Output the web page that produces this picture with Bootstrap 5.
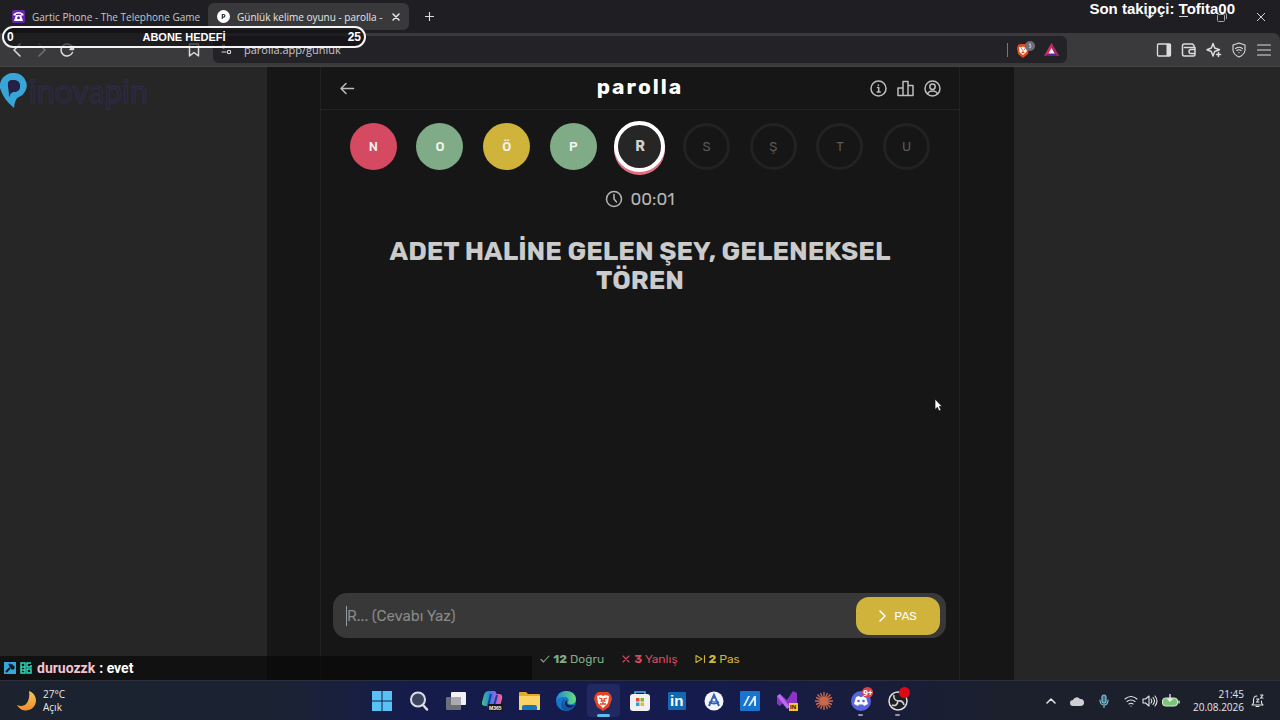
<!DOCTYPE html>
<html lang="tr" data-bs-theme="dark">
<head>
<meta charset="utf-8">
<meta name="viewport" content="width=device-width, initial-scale=1">
<title>Günlük kelime oyunu - parolla</title>
<link rel="stylesheet" href="https://cdn.jsdelivr.net/npm/bootstrap@5.3.0/dist/css/bootstrap.min.css">
<style>
:root{--rubik:Rubik,Inter,"Liberation Sans",sans-serif;--segoe:"Segoe UI","Open Sans","Noto Sans",sans-serif;--arial:Arial,"Liberation Sans",sans-serif}
body{background:#262626;font-family:var(--segoe);font-size:11px;line-height:16px;color:#dcdcdc}
button{color:inherit;background:none;border:0;padding:0;display:inline-flex;align-items:center;justify-content:center}
svg{display:block;flex:none}
.line-icon{fill:none;stroke:currentColor;stroke-width:1.5;stroke-linecap:round;stroke-linejoin:round}
.fine{stroke-width:1.1}
.dim{color:#707073}
/* browser */
.tabstrip{height:33px;background:#1f1e23}
.tab-link{height:27px;font-size:10px;color:#c6c6c8;text-decoration:none}
.tab-first{width:204px;padding:0 0 0 12px;gap:7px}
.tab-open{width:201px;padding:0 9px;gap:7px;background:#39393c;border-radius:6px;color:#e6e6e6}
.tab-title{flex:1;white-space:nowrap}
.win-buttons{gap:25px;padding-right:14px;color:#d5d5d7}
.toolbar{display:grid;grid-template-columns:213px minmax(0,1fr) 213px;height:34px;background:#3a3a3d;border-top-right-radius:7px;border-bottom:1px solid #434346}
.toolbar-wrap{background:#1f1e23}
.nav-left{padding:0 12px 0 9px;gap:9px}
.nav-right{gap:9px;padding-right:8px}
.url-box{background:#232227;border-radius:6px;margin:3px 0;padding:0 8px;gap:12px}
.url-field{background:none;border:0;outline:0;color:#c5c5c8;font-size:11px;padding:0;min-width:0;height:18px}
.url-actions{gap:8px}
.divider{width:1px;height:14px;background:#77777a}
/* game */
.stage{background:#161616;width:747px;max-width:100%}
.game{width:640px;max-width:100%;border:solid #222;border-width:0 1px;font-family:var(--rubik);color:#bdbdbd}
.game-head{display:grid;grid-template-columns:1fr auto 1fr;height:43px;border-bottom:1px solid #242424;padding:0 17px}
.brand-name{font-size:21px;line-height:24px;font-weight:700;letter-spacing:2px;color:#fff;margin:0 0 2px}
.letters{display:grid;grid-template-columns:repeat(9,1fr);width:600px;max-width:100%;margin:9px auto 0;padding:0;list-style:none}
.letters li{display:flex;align-items:center;justify-content:center;height:55px}
.ball{display:flex;align-items:center;justify-content:center;width:47px;height:47px;border-radius:50%;font-size:13px;font-weight:500;color:#f4f4f4}
.ball-wrong{background:#d54a61}.ball-right{background:#7fab87}.ball-pass{background:#cfb33b}
.ball-wait{border:3px solid #222;color:#5a5a5a;font-weight:400}
.ball-now{width:51px;height:51px;background:#262626;border:4px solid #fff;box-shadow:0 3px 0 #df7082;color:#d0d0d0;font-weight:700;font-size:14px}
.clock{font-size:17px;line-height:20px;margin-top:15px;gap:7px;color:#b5b5b5}
.question{font-size:26px;line-height:29px;font-weight:700;color:#cbcbcb;text-align:center;margin:28px auto 0;width:520px;max-width:100%}
.answer{background:#383838;border-radius:14px;height:45px;margin:0 13px 0 12px;padding:3px 6px 3px 13px}
.answer-input{background:none;border:0;border-left:1px solid #999;outline:0;color:#ddd;font-size:15px;height:20px;padding:0;min-width:0}
.answer-input::placeholder{color:#898989;opacity:1}
.pass-btn{width:84px;height:38px;border-radius:13px;background:#cfb33b;color:#fff;font-size:12px;font-weight:400;gap:7px}
.stats{font-size:12px;line-height:16px;gap:17px;margin:13px 0;color:#7fab87}
.stats span{display:flex;align-items:center;gap:3px}
.stats b{font-weight:700}
.st-wrong{color:#d54a61}.st-pass{color:#cfb33b}
/* stream overlays */
.goal{position:absolute;left:2px;top:26px;width:364px;height:22px;padding:0 3px;border:2px solid #f4f4f4;border-radius:11px;background:rgba(15,15,18,.65);font:700 12px/18px var(--arial);color:#fff}
.goal-end{flex:1}
.goal-title{font-size:11px}
.follower{position:absolute;right:45px;top:0;font:700 15px/18px var(--arial);color:#fff}
.sponsor{position:absolute;left:0;top:72px}
.sponsor-name{font:400 32px/38px Lato,sans-serif;-webkit-text-stroke:1px #302c48;color:#262530}
.chat{position:absolute;left:0;bottom:40px;width:532px;height:24px;background:rgba(8,8,8,.7);padding-left:4px;font:700 14px/24px Roboto,sans-serif;color:#fff}
.chat-name{color:#f3c3d2;margin:0 4px 0 5px}
.pointer{position:absolute;left:934px;top:398px}
/* taskbar */
.taskbar{height:40px;background:linear-gradient(90deg,#1c222e 0,#1b2233 22%,#151c4b 32%,#151b4d 55%,#191d38 70%,#1b202d 78%,#1b202b);border-top:1px solid #292f3b;display:grid;grid-template-columns:1fr 552px 1fr}
.weather{font-size:10px;line-height:13px;padding-left:16px;gap:7px;color:#e8e8ea}
.apps{display:grid;grid-template-columns:repeat(15,1fr)}
.apps button{position:relative}
.apps .running::after{content:"";position:absolute;bottom:4px;width:5px;height:2px;border-radius:1px;background:#9295a5}
.apps .focused{background:#212960;border-radius:4px;margin:3px 2px}
.apps .focused::after{content:"";position:absolute;bottom:0;width:13px;height:3px;border-radius:2px;background:#5fbbea}
.note{position:absolute;top:6px;left:20px;min-width:11px;height:11px;border-radius:6px;background:#d84552;color:#fff;font:700 8px/11px var(--segoe)}
.note-live{background:#e00913}
.tray{padding-right:16px;gap:14px;color:#e6e6ea}
.status-group{gap:4px}
.mic{color:#8fc7dd}
.date{font-size:10px;line-height:13px;text-align:right;margin:0 -7px 0 -1px}
</style>
</head>
<body>
<div class="d-flex flex-column min-vh-100 position-relative overflow-hidden">
<header>
 <div class="tabstrip d-flex align-items-center">
  <a href="#" class="tab-link tab-first d-flex align-items-center"><svg width="13" height="13" viewBox="0 0 13 13"><rect width="13" height="13" rx="2" fill="#6526ac"/><path d="M1.500 5.500V4Q6.500 0 11.500 4v1.500H9V4Q6.500 3 4 4v1.500zM4 5h5l2 6H2z" fill="#fff"/><circle cx="6.500" cy="7.700" r="1.500" fill="#6526ac"/></svg><span class="tab-title">Gartic Phone - The Telephone Game</span></a>
  <a href="#" class="tab-link tab-open d-flex align-items-center ms-1"><svg width="13" height="13" viewBox="0 0 13 13"><circle cx="6.500" cy="6.500" r="6.500" fill="#fff"/><path d="M5.300 9V4.500h1.300a1.300 1.300 0 0 1 0 2.600H5.300" fill="none" stroke="#333" stroke-width="1.200"/></svg><span class="tab-title">Günlük kelime oyunu - parolla -</span><svg class="line-icon" width="8" height="8" viewBox="0 0 8 8"><path d="m1 1 6 6m0-6L1 7"/></svg></a>
  <button class="ms-3" aria-label="Yeni sekme"><svg class="line-icon fine" width="9" height="9" viewBox="0 0 9 9"><path d="M4.500 0v9M0 4.500h9"/></svg></button>
  <div class="win-buttons d-flex align-items-center ms-auto">
   <button aria-label="Sekme ara"><svg class="line-icon" width="9" height="9" viewBox="0 0 9 9"><path d="m1 3 3.500 3L8 3"/></svg></button>
   <button aria-label="Küçült"><svg width="9" height="9"><path d="M0 4.500h9" stroke="currentColor"/></svg></button>
   <button class="ms-1" aria-label="Büyüt"><svg width="10" height="10" fill="none" stroke="#a5a5a8"><rect x=".5" y="2.500" width="7" height="7" rx="1"/><path d="M3 .5h4q2.500 0 2.500 2.500v4"/></svg></button>
   <button class="ms-1" aria-label="Kapat"><svg width="10" height="10"><path d="m1 1 8 8m0-8L1 9" stroke="currentColor"/></svg></button>
  </div>
 </div>
 <div class="toolbar-wrap"><div class="toolbar">
  <div class="nav-left d-flex align-items-center">
   <button aria-label="Geri"><svg class="line-icon" width="16" height="16"><path d="m11 2-6 6 6 6"/></svg></button>
   <button class="dim" aria-label="İleri"><svg class="line-icon" width="16" height="16"><path d="m5 2 6 6-6 6"/></svg></button>
   <button aria-label="Yenile"><svg class="line-icon" width="16" height="16"><path d="M13.500 10.500a6 6 0 1 1 .2-4.500"/><path d="M14.500 4v3.500H11z" fill="currentColor"/></svg></button>
   <button class="ms-auto" aria-label="Yer imi"><svg class="line-icon" width="14" height="16"><path d="M2.500 2h9v12L7 10.500 2.500 14z"/></svg></button>
  </div>
  <div class="url-box d-flex align-items-center">
   <svg class="line-icon fine" width="11" height="11"><circle cx="2.500" cy="2.500" r="1.500"/><path d="M6 2.500h4M1 8h4"/><circle cx="8" cy="8" r="1.700"/></svg>
   <input class="url-field flex-grow-1" aria-label="Adres" value="parolla.app/gunluk">
   <div class="url-actions d-flex align-items-center">
   <i class="divider"></i>
   <button aria-label="Brave kalkanı"><svg width="20" height="18"><path d="m2 4 2-1h6l2 1 1 3-1 6-5 4-5-4-1-6z" fill="#e34a1c"/><path d="m3 6 2 .5 2-1 2 1 2-.5-.5 5L7 14l-3.500-3z" fill="#fff"/><path d="m5 7.500 1.500 1M9.500 7.500 8 8.500M7 9v3M5.500 11.500h3" stroke="#e34a1c"/><circle cx="14" cy="5" r="5" fill="#6c6d78"/><path d="M12.700 3h2l-1 1.500q1.600 0 1.300 1.500-.5 1.300-2.200.5" fill="none" stroke="#ddd" stroke-width=".8"/></svg></button>
   <button aria-label="Ödüller"><svg width="15" height="14"><path d="M7.500 0 15 13H0z" fill="#e02c55"/><path d="m0 13 7.500-4 7.500 4z" fill="#5b278f"/><path d="m7.500 0 7.500 13-4-2.500-3.500-6z" fill="#9c2a7c"/><path d="m7.500 5 3 5.500h-6z" fill="#fff"/></svg></button>
   </div>
  </div>
  <div class="nav-right d-flex align-items-center justify-content-end">
   <button aria-label="Kenar çubuğu"><svg width="16" height="16"><rect x="1.500" y="2" width="13" height="12" rx="1" fill="none" stroke="currentColor" stroke-width="1.300"/><path d="M10.500 2h4v12h-4z" fill="currentColor"/></svg></button>
   <button aria-label="Cüzdan"><svg class="line-icon" width="16" height="16"><path d="M13 5V3.500L11.500 2H3Q1.500 2 1.500 4v8Q1.500 14 3 14h9.500q1.500 0 1.500-1.500V5.500H3.500M14 7.500h-4a2 2 0 0 0 0 4h4"/></svg></button>
   <button aria-label="Leo"><svg class="line-icon" width="16" height="16"><path d="M7 1.500 8.700 6 13.500 7.700 8.700 9.500 7 14 5.300 9.500 1 7.700 5.300 6zM12.500 10.500v4M10.500 12.500h4"/></svg></button>
   <button aria-label="VPN"><svg class="line-icon fine" width="16" height="16"><path d="m8 1 6 2v5.500Q13 13 8 15 3 13 2 8.500V3zM4.500 6.500q3.500-2.500 7 0M5.800 8.500q2.200-1.500 4.400 0M8 10.500v.2"/></svg></button>
   <button aria-label="Menü"><svg class="line-icon fine" width="16" height="16"><path d="M1.500 3h13M1.500 8h13M1.500 13h13"/></svg></button>
  </div>
 </div></div>
</header>

<main class="flex-grow-1 d-flex justify-content-center">
 <div class="stage d-flex justify-content-center">
 <section class="game d-flex flex-column">
  <div class="game-head align-items-center">
   <div class="d-flex"><button aria-label="Geri dön"><svg class="line-icon" width="18" height="19"><path d="M15.500 9.500H3M8 4.500l-5 5 5 5"/></svg></button></div>
   <h1 class="brand-name">parolla</h1>
   <div class="d-flex justify-content-end gap-2">
    <button aria-label="Bilgi"><svg class="line-icon" width="19" height="19"><circle cx="9.500" cy="9.500" r="7.500"/><path d="M8.500 8.500h1.200V13m-1.500 0h3M9.400 6v.2"/></svg></button>
    <button aria-label="İstatistik"><svg class="line-icon" width="19" height="19"><path d="M2 9h5v7.500H2zM7 2.500h5v14H7zM12 6.500h5v10h-5z"/></svg></button>
    <button aria-label="Profil"><svg class="line-icon" width="19" height="19"><circle cx="9.500" cy="9.500" r="7.500"/><circle cx="9.500" cy="7.700" r="2.700"/><path d="M4.500 15q1-3 5-3t5 3"/></svg></button>
   </div>
  </div>
  <ul class="letters">
   <li><span class="ball ball-wrong">N</span></li><li><span class="ball ball-right">O</span></li><li><span class="ball ball-pass">Ö</span></li><li><span class="ball ball-right">P</span></li><li><span class="ball ball-now">R</span></li><li><span class="ball ball-wait">S</span></li><li><span class="ball ball-wait">Ş</span></li><li><span class="ball ball-wait">T</span></li><li><span class="ball ball-wait">U</span></li>
  </ul>
  <div class="clock d-flex align-items-center justify-content-center"><svg class="line-icon" width="18" height="18"><circle cx="9" cy="9" r="7.500"/><path d="M9 4.500V9l2.500 3"/></svg><time>00:01</time></div>
  <h2 class="question">ADET HALİNE GELEN ŞEY, GELENEKSEL TÖREN</h2>
  <form class="answer d-flex align-items-center mt-auto">
   <input class="answer-input flex-grow-1" aria-label="Cevap" placeholder="R... (Cevabı Yaz)">
   <button type="button" class="pass-btn"><svg class="line-icon" width="8" height="12"><path d="m1 1 5 5-5 5"/></svg>PAS</button>
  </form>
  <div class="stats d-flex justify-content-center">
   <span><svg class="line-icon fine" width="10" height="10"><path d="m1 5.500 2.500 2.500L9 2"/></svg><b>12</b>Doğru</span>
   <span class="st-wrong"><svg class="line-icon fine" width="10" height="10"><path d="m2 2 6 6m0-6L2 8"/></svg><b>3</b>Yanlış</span>
   <span class="st-pass"><svg class="line-icon fine" width="11" height="10"><path d="M1 1.500v7L7 5zM9.500 1.500v7"/></svg><b>2</b>Pas</span>
  </div>
 </section>
 </div>
</main>

<footer class="taskbar">
 <div class="weather d-flex align-items-center"><svg width="20" height="20" viewBox="0 0 20 20"><defs><linearGradient id="moon" x2="0" y2="1"><stop stop-color="#f5c65e"/><stop offset="1" stop-color="#ef8d2c"/></linearGradient></defs><path d="M13 0a10 10 0 1 1-12 14Q9 17 12 10 14 5 13 0z" fill="url(#moon)"/></svg><div>27°C<br>Açık</div></div>
 <nav class="apps">
  <button aria-label="Başlat"><svg width="20" height="20"><path d="M0 0h9.500v9.500H0zM10.500 0H20v9.500h-9.500zM0 10.500h9.500V20H0zM10.500 10.500H20V20h-9.500z" fill="#58c2f5"/></svg></button>
  <button aria-label="Ara"><svg width="20" height="20"><circle cx="9" cy="8.500" r="7" fill="#3b4560" stroke="#dcdde2" stroke-width="2"/><path d="m14 14 4 4.500" stroke="#dcdde2" stroke-width="2.500" stroke-linecap="round"/></svg></button>
  <button aria-label="Görev görünümü"><svg width="20" height="20"><rect x="5" y="1" width="15" height="13" rx="1" fill="#f2f2f2"/><rect y="6" width="15" height="13" rx="1" fill="#6d6e76"/><path d="M5 6h10v8H5z" fill="#aaaab0"/></svg></button>
  <button aria-label="Microsoft 365"><svg width="21" height="20"><defs><linearGradient id="cop" x2="1"><stop stop-color="#48c27b"/><stop offset=".4" stop-color="#2587e5"/><stop offset=".7" stop-color="#b35be0"/><stop offset="1" stop-color="#f26c83"/></linearGradient></defs><path d="M7 0h5q2 0 2.500 3H17q4 0 3 5l-2 7q-1 3-4 3H8q-2 0-2.500-3H3q-4 0-3-4l2-7Q3 0 7 0z" fill="url(#cop)"/><path d="m9 3-3 12M15 4l-3 11" stroke="#174099" stroke-width="2"/><rect x="6" y="13" width="15" height="7" rx="1" fill="#17151b"/><text x="7" y="19" font-family="Liberation Sans" font-size="5" font-weight="700" fill="#fff">M365</text></svg></button>
  <button aria-label="Dosya Gezgini"><svg width="21" height="18"><path d="M0 1q0-1 1-1h6l2 2h11q1 0 1 1v15H0z" fill="#e7a92d"/><path d="M0 4h21v13q0 1-1 1H1q-1 0-1-1z" fill="#fbd465"/><path d="M3 18v-3q0-2 2-2h11q2 0 2 2v3z" fill="#1976bd"/></svg></button>
  <button aria-label="Edge"><svg width="20" height="20"><defs><linearGradient id="edge" x2="1"><stop stop-color="#1e86dc"/><stop offset="1" stop-color="#65df77"/></linearGradient></defs><circle cx="10" cy="10" r="10" fill="#1676cb"/><path d="M0 10Q1 0 10 0t10 8q0 6-7 5-2-1-.500-3Q13 6 8 6 2 6 0 10z" fill="url(#edge)"/><path d="M9 8q-5 9 9 8-3 4-7 4-8-2-5-9 1-3 3-3z" fill="#15539f"/><path d="M11 9q-2 7 8 5-6 5-10 0-1-3 2-5z" fill="#151c4b"/></svg></button>
  <button class="focused" aria-label="Brave"><svg width="18" height="20"><path d="m1 4 3-3h10l3 3 1 4-3 8-6 4-6-4-3-8z" fill="#e84424"/><path d="m3 5 4-1 2 1 2-1 4 1-1 7-5 5-5-5z" fill="#fff"/><path d="m5 7 3 1-1 3M13 7l-3 1 1 3M9 9v4M6 13h6" stroke="#e84424" stroke-width="1.300" fill="none"/></svg></button>
  <button aria-label="Store"><svg width="20" height="20"><path d="M5 4V1h10v3" fill="none" stroke="#55b7e9" stroke-width="1.500"/><rect y="3" width="20" height="17" rx="3" fill="#f1f1f3"/><path d="M6 7h3.500v3.500H6z" fill="#e94d31"/><path d="M10.500 7H14v3.500h-3.500z" fill="#78b928"/><path d="M6 11.500h3.500V15H6z" fill="#25a0e8"/><path d="M10.500 11.500H14V15h-3.500z" fill="#f8b719"/></svg></button>
  <button aria-label="LinkedIn"><svg width="18" height="18"><rect width="18" height="18" rx="1" fill="#1269b2"/><text x="2" y="14" font-family="Liberation Sans" font-size="15" font-weight="700" fill="#fff">in</text></svg></button>
  <button aria-label="Asistan"><svg width="20" height="20"><circle cx="10" cy="10" r="9.500" fill="#f4f5f8"/><path d="m5 15 5-11 5 11M5 11q5 3 10 0" fill="none" stroke="#2f62b4" stroke-width="2"/><circle cx="10" cy="9" r="2" fill="#f4f5f8" stroke="#2f62b4"/></svg></button>
  <button aria-label="Tasarım"><svg width="20" height="20"><rect width="20" height="20" rx="1" fill="#1974d0"/><path d="m3 15 5-10h2L5 15zM8 15l6-10h2v10h-2V9l-4 6z" fill="#d8edff"/></svg></button>
  <button aria-label="Visual Studio"><svg width="21" height="20"><path d="m0 5 3-2 7 6 6-9 4 2v15l-4 2-9-8-4 4-3-2z" fill="#8c35c4"/><path d="m0 5 3-2 10 13-3 2z" fill="#bb6bed"/><rect x="12" y="12" width="9" height="8" fill="#f7c42f"/><text x="13" y="18" font-family="Liberation Sans" font-size="6" font-weight="700" fill="#111">IN</text></svg></button>
  <button aria-label="Claude"><svg width="18" height="18"><path d="M9 0v18M0 9h18M2.500 2.500l13 13m0-13-13 13M5.500 1l7 16M12.500 1l-7 16M1 5.500l16 7M1 12.500l16-7" stroke="#c9694c" stroke-width="1.400"/></svg></button>
  <button class="running" aria-label="Discord"><svg width="20" height="20"><circle cx="10" cy="10" r="10" fill="#5865dc"/><path d="m5 6 3-1 1 1h2l1-1 3 1 2 7-4 2-1-1.500H8L7 15l-4-2z" fill="#fff"/><circle cx="7.500" cy="10" r="1.300" fill="#5865dc"/><circle cx="12.500" cy="10" r="1.300" fill="#5865dc"/></svg><span class="note">9+</span></button>
  <button class="running" aria-label="OBS"><svg width="20" height="20"><circle cx="10" cy="10" r="9" fill="#1d1d24" stroke="#dedee2" stroke-width="1.500"/><path d="M6 4q-1 5 4 6 5-1 6 4M10 10q-1 6-6 4" fill="none" stroke="#cfcfd4" stroke-width="1.600"/></svg><span class="note note-live"></span></button>
 </nav>
 <div class="tray d-flex align-items-center justify-content-end">
  <svg class="line-icon" width="10" height="10"><path d="m1 7 4-4 4 4"/></svg>
  <svg width="14" height="10"><path d="M3 10a3 3 0 0 1 0-6 4 4 0 0 1 7-1 3.500 3.500 0 0 1 1 7z" fill="#cfd0d4"/></svg>
  <svg class="line-icon fine mic" width="12" height="14"><rect x="4" y="1" width="4" height="8" rx="2" fill="#346f91"/><path d="M2 6q0 5 4 5t4-5M6 11v2.500"/></svg>
  <div class="status-group d-flex align-items-center">
  <svg class="line-icon fine" width="14" height="12"><path d="M1 4q6-5 12 0M3 6.500q4-3 8 0M5 9q2-1.500 4 0M7 11v.1"/></svg>
  <svg class="line-icon fine" width="16" height="14"><path d="M1 5h2.500L7 2v10L3.500 9H1zM9 5q1.500 2 0 4M11 3.500q3 3.500 0 7M13 2q4 5 0 10"/></svg>
  <svg width="18" height="14"><rect x=".5" y="4" width="15" height="8" rx="3" fill="#7bc577" stroke="#e3e7e1"/><path d="M17 6.500v3M8 0v7M5.500 4.500 8 7l2.500-2.500" fill="none" stroke="#eee" stroke-width="1.300"/></svg>
  </div>
  <div class="date">21:45<br>20.08.2026</div>
  <svg class="line-icon fine" width="13" height="13"><path d="M6 2Q2.500 2 2.500 6v3L1 11h11l-1.500-2V7M5 12.500h3M5.500 5h2.500L5.500 8H8M9.500 1H12L9.500 4H12"/></svg>
 </div>
</footer>

<div class="goal d-flex"><span class="goal-end">0</span><span class="goal-title">ABONE HEDEFİ</span><span class="goal-end text-end">25</span></div>
<div class="follower">Son takipçi: Tofita00</div>
<div class="sponsor d-flex"><svg width="29" height="37"><path fill-rule="evenodd" d="M13 1a12.500 12.500 0 0 1 6 24q-4 1-5 11Q3 27 0 16A13 13 0 0 1 13 1zM13 8q-6 0-5 6 1 3 1 11 1-4 4-5 7 0 7-6t-7-6z" fill="#38a5d8"/><path d="M13 8q7 0 7 6t-7 6q-3 1-4 5 0-8-1-11-1-6 5-6z" fill="#252047"/></svg><span class="sponsor-name">inovapin</span></div>
<div class="chat d-flex align-items-center"><svg width="12" height="12"><rect width="12" height="12" fill="#35a7dd"/><path d="m2 10 4-4M5 2l5 5" stroke="#0c1d2c" stroke-width="2"/><path d="m5 4 3-2 3 3-3 3z" fill="#0c1d2c"/></svg><svg class="ms-1" width="12" height="12" fill="none" stroke="#29ddbb" stroke-width="1.500"><path d="M1 1h4v4H1zM1 5h4v6H1zM11 1H7v4h4V3M7 7h4v4H7zM1 8h4"/></svg><span class="chat-name">duruozzk</span>: evet</div>
<svg class="pointer" width="9" height="14"><path d="M1 1v10.500l2.400-2.200L5 13l2-1-1.700-3.500H8z" fill="#fff" stroke="#111" stroke-width=".7"/></svg>
</div>
<script src="https://cdn.jsdelivr.net/npm/bootstrap@5.3.0/dist/js/bootstrap.bundle.min.js"></script>
</body>
</html>
